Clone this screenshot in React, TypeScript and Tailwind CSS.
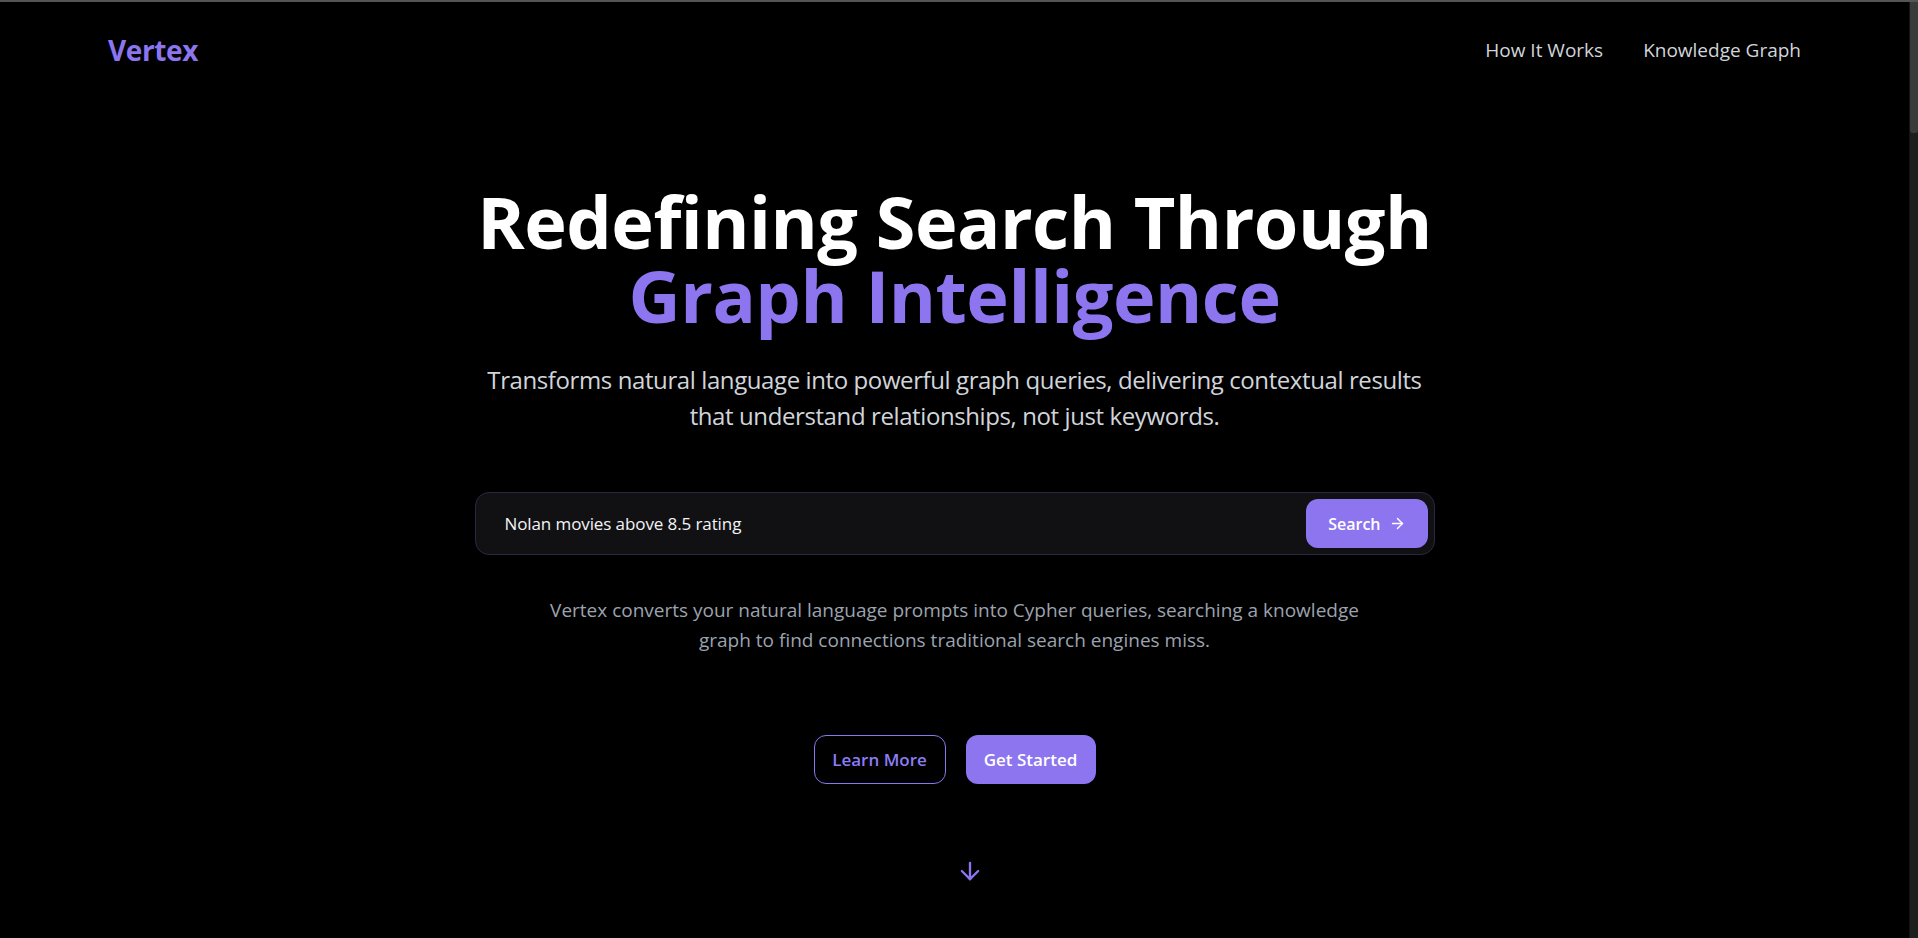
import { ArrowDown, ArrowRight } from 'lucide-react';

const links = ['How It Works', 'Knowledge Graph'];

function Header() {
  return (
    <header className="flex items-center justify-between px-[108px] pt-[26px]">
      <span className="text-[28px] font-bold leading-[44px] tracking-[-0.4px] text-[#8c75ef]">Vertex</span>
      <nav className="flex items-center gap-10">
        {links.map((link) => (
          <a key={link} href="#" className="text-[19px] leading-[44px] text-[#d1d5db]">
            {link}
          </a>
        ))}
      </nav>
    </header>
  );
}

function SearchBar() {
  return (
    <div className="mt-[58px] flex w-full items-center rounded-[14px] border border-[#2a2740] bg-[#111114] p-1.5">
      <input
        defaultValue="Nolan movies above 8.5 rating"
        className="flex-1 bg-transparent pl-[23px] text-[17px] tracking-[-0.1px] text-[#f3f4f6] outline-none"
      />
      <button className="flex h-[49px] items-center gap-2 rounded-xl bg-[#8c75ef] px-[22px] text-base font-semibold text-white">
        Search
        <ArrowRight size={17} strokeWidth={2} />
      </button>
    </div>
  );
}

function Hero() {
  return (
    <section className="mx-auto flex w-full max-w-5xl flex-col items-center px-8 pt-[112px] text-center">
      <h1 className="text-7xl font-bold leading-[74px] tracking-[-0.5px] text-white">
        <span className="block">Redefining Search Through</span>
        <span className="block text-[#8c75ef]">Graph Intelligence</span>
      </h1>
      <p className="mt-[30px] text-2xl leading-9 tracking-[-0.4px] text-[#d1d5db]">
        Transforms natural language into powerful graph queries, delivering contextual results that
        understand relationships, not just keywords.
      </p>
      <SearchBar />
      <p className="mt-10 max-w-[830px] text-[19px] leading-[30px] text-[#9ca3af]">
        Vertex converts your natural language prompts into Cypher queries, searching a knowledge graph
        to find connections traditional search engines miss.
      </p>
      <div className="mt-20 flex items-center gap-5">
        <button className="h-[49px] w-[132px] rounded-xl border border-[#8c75ef] text-[17px] font-semibold text-[#8c7cf6]">
          Learn More
        </button>
        <button className="h-[49px] w-[130px] rounded-xl bg-[#8c75ef] text-[17px] font-semibold text-white">
          Get Started
        </button>
      </div>
      <div className="mt-[73px] pl-[30px] text-[#8c75ef]">
        <ArrowDown size={28} strokeWidth={2} />
      </div>
    </section>
  );
}

export default function App() {
  return (
    <div className="flex h-screen flex-col overflow-hidden bg-black font-['Open_Sans',sans-serif]">
      <div className="h-[2px] shrink-0 bg-[#555555]" />
      <div className="flex min-h-0 flex-1">
        <main className="flex-1">
          <Header />
          <Hero />
        </main>
        <div className="flex w-[9px] shrink-0 flex-col border-l border-[#141414] bg-[#1e1e1e]">
          <div className="h-[131px] rounded-b-[3px] bg-[#3a3a3a]" />
        </div>
      </div>
    </div>
  );
}
